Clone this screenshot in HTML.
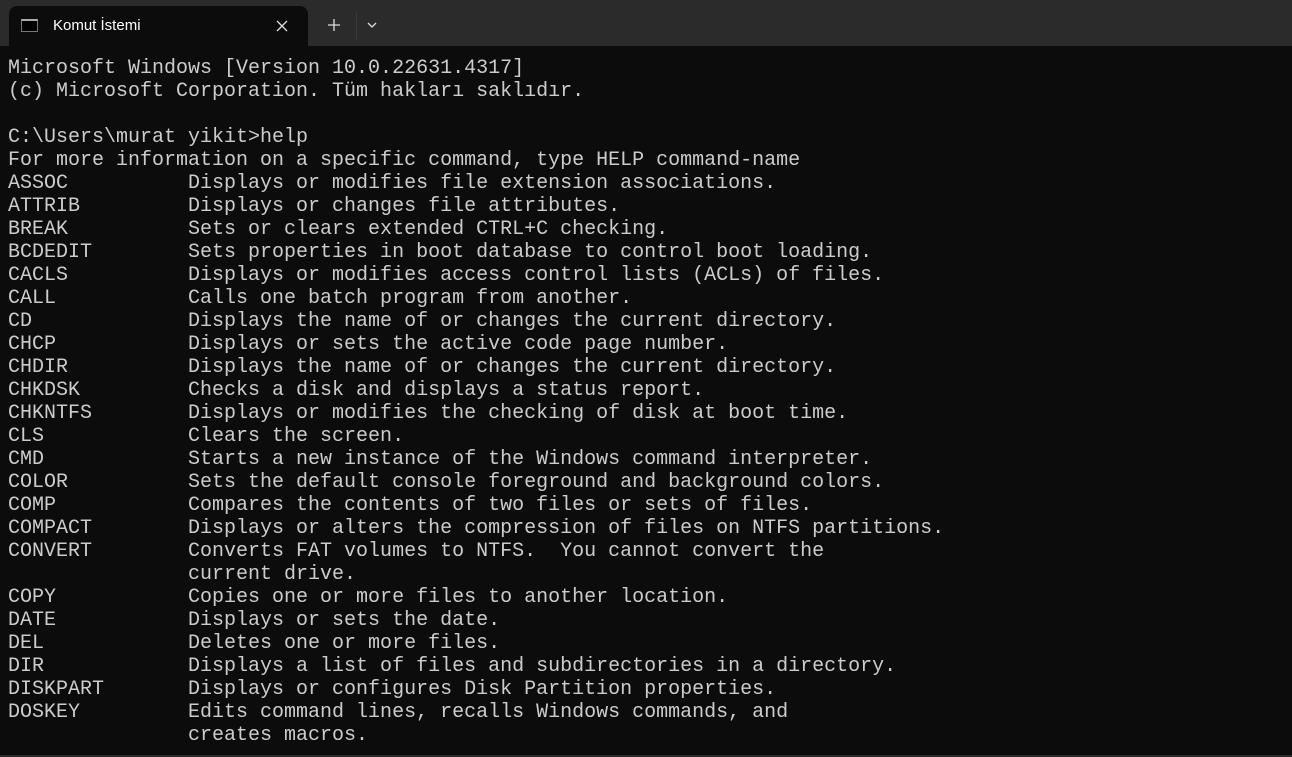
<!DOCTYPE html>
<html><head><meta charset="utf-8"><style>
html,body{margin:0;padding:0;width:1292px;height:757px;overflow:hidden;background:#0c0c0c}
.bar{position:absolute;left:0;top:0;width:1292px;height:46px;background:#2b2b2b}
.tab{position:absolute;left:9px;top:6px;width:299px;height:40px;background:#0c0c0c;border-radius:8px 8px 0 0}
.tab .t{position:absolute;left:44px;top:11px;font:15px "Liberation Sans",sans-serif;color:#fff}
.ico{position:absolute;left:12px;top:13px;width:17px;height:13px;background:#000;border:1px solid #777;border-top:2px solid #aaa;box-sizing:border-box}
pre{position:absolute;left:8px;top:57px;margin:0;font:20px/23px "Liberation Mono",monospace;color:#cccccc;letter-spacing:0}
.sep{position:absolute;left:356px;top:12px;width:1px;height:28px;background:#3a3a3a}
.bot{position:absolute;left:0;top:755px;width:1292px;height:2px;background:#2b2b2b}
</style></head><body>
<div class="bar"></div>
<div class="tab"><div class="ico"></div><div class="t">Komut İstemi</div>
<svg style="position:absolute;left:267px;top:14px" width="12" height="12"><path d="M1 1L11 11M11 1L1 11" stroke="#ddd" stroke-width="1.3"/></svg></div>
<svg style="position:absolute;left:327px;top:18px" width="14" height="14"><path d="M7 1V13M1 7H13" stroke="#ddd" stroke-width="1.3"/></svg>
<div class="sep"></div>
<svg style="position:absolute;left:367px;top:22px" width="10" height="6"><path d="M1 1L5 5L9 1" stroke="#ddd" stroke-width="1.3" fill="none"/></svg>
<pre>Microsoft Windows [Version 10.0.22631.4317]
(c) Microsoft Corporation. Tüm hakları saklıdır.

C:\Users\murat yikit>help
For more information on a specific command, type HELP command-name
ASSOC          Displays or modifies file extension associations.
ATTRIB         Displays or changes file attributes.
BREAK          Sets or clears extended CTRL+C checking.
BCDEDIT        Sets properties in boot database to control boot loading.
CACLS          Displays or modifies access control lists (ACLs) of files.
CALL           Calls one batch program from another.
CD             Displays the name of or changes the current directory.
CHCP           Displays or sets the active code page number.
CHDIR          Displays the name of or changes the current directory.
CHKDSK         Checks a disk and displays a status report.
CHKNTFS        Displays or modifies the checking of disk at boot time.
CLS            Clears the screen.
CMD            Starts a new instance of the Windows command interpreter.
COLOR          Sets the default console foreground and background colors.
COMP           Compares the contents of two files or sets of files.
COMPACT        Displays or alters the compression of files on NTFS partitions.
CONVERT        Converts FAT volumes to NTFS.  You cannot convert the
               current drive.
COPY           Copies one or more files to another location.
DATE           Displays or sets the date.
DEL            Deletes one or more files.
DIR            Displays a list of files and subdirectories in a directory.
DISKPART       Displays or configures Disk Partition properties.
DOSKEY         Edits command lines, recalls Windows commands, and
               creates macros.</pre>
<div class="bot"></div>
</body></html>
